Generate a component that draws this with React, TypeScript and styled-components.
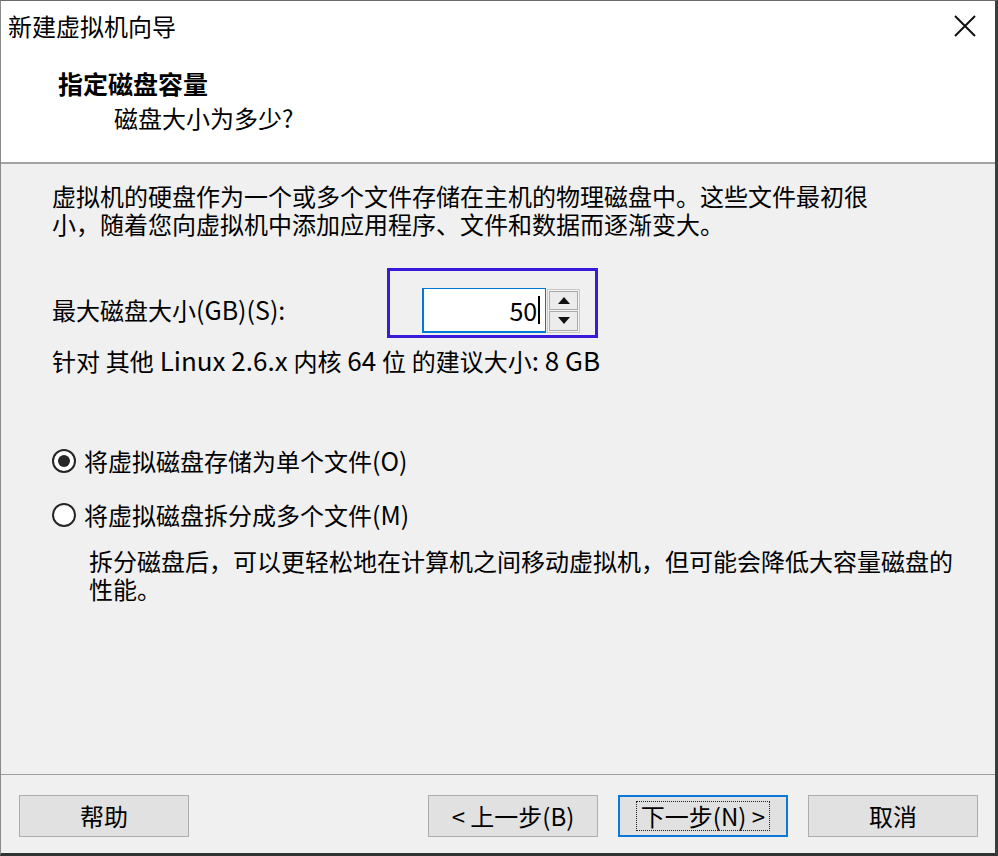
import React from "react";
import styled, { createGlobalStyle } from "styled-components";

const GlobalStyle = createGlobalStyle`
  html, body { margin: 0; padding: 0; background: #f0f0f0; }
  * { box-sizing: border-box; }
  body {
    font-family: "Noto Sans CJK SC", "Noto Sans", sans-serif;
    color: #000;
  }
`;

const Window = styled.div`
  width: 998px;
  height: 856px;
  display: flex;
  flex-direction: column;
  background: #f0f0f0;
  border-left: 1px solid #8a8a8a;
  border-right: 3px solid #34403b;
  border-bottom: 3px solid #2e3531;
  border-top: 1px solid #6a6a6a;
`;

const Header = styled.div`
  height: 163px;
  background: #ffffff;
  border-bottom: 2px solid #a3a3a3;
  display: flex;
  flex-direction: column;
`;

const TitleBar = styled.div`
  height: 49px;
  display: flex;
  align-items: center;
  justify-content: space-between;
  padding: 0 18px 0 7px;
`;

const Title = styled.div`
  font-size: 24px;
  line-height: 28px;
`;

const CloseButton = styled.div`
  width: 24px;
  height: 24px;
  display: flex;
  align-items: center;
  justify-content: center;
`;

const Heading = styled.div`
  margin: 19px 0 0 57px;
  font-size: 25px;
  line-height: 28px;
  font-weight: 700;
`;

const SubHeading = styled.div`
  margin: 7px 0 0 113px;
  font-size: 24px;
  line-height: 28px;
`;

const Body = styled.div`
  flex: 1;
  display: flex;
  flex-direction: column;
  padding: 18px 0 0 51px;
`;

const Text = styled.div<{ $mt?: number; $ml?: number }>`
  font-size: 24px;
  line-height: 28px;
  height: 28px;
  margin-top: ${(p) => p.$mt ?? 0}px;
  margin-left: ${(p) => p.$ml ?? 0}px;
  white-space: pre;
`;

const Latin = styled.span<{ $size?: number }>`
  font-size: ${(p) => p.$size ?? 26}px;
  line-height: 18px;
`;

const SizeRow = styled.div`
  display: flex;
  align-items: flex-start;
  margin-top: 30px;
`;

const SizeLabel = styled.div`
  width: 335px;
  font-size: 24px;
  line-height: 28px;
  margin-top: 28px;
`;

const Highlight = styled.div`
  border: 3px solid #3a1ad8;
  padding: 17px 15px 2px 32px;
  display: flex;
  align-items: center;
  width: 211px;
  height: 70px;
`;

const SpinInput = styled.div`
  width: 125px;
  height: 45px;
  border: 1px solid #0078d7;
  border-left-width: 2px;
  border-bottom-width: 2px;
  background: #fff;
  display: flex;
  align-items: center;
  justify-content: flex-end;
  padding-right: 5px;
  font-size: 25px;
  line-height: 28px;
`;

const Caret = styled.span`
  display: inline-block;
  width: 2px;
  height: 28px;
  background: #000;
  margin-left: 1px;
`;

const Spinner = styled.div`
  width: 33px;
  height: 44px;
  margin-left: 1px;
  border: 1px solid #c8c8c8;
  padding: 1px;
  display: flex;
  flex-direction: column;
  gap: 1px;
  background: #f4f4f4;
`;

const SpinButton = styled.div`
  flex: 1;
  border: 1px solid #a9a9a9;
  background: #ececec;
  display: flex;
  align-items: center;
  justify-content: center;
`;

const RadioRow = styled.div<{ $mt: number }>`
  display: flex;
  align-items: center;
  margin-top: ${(p) => p.$mt}px;
  gap: 8px;
`;

const RadioCircle = styled.div<{ $checked?: boolean }>`
  width: 24px;
  height: 24px;
  border-radius: 50%;
  border: 2px solid #262626;
  background: #fff;
  display: flex;
  align-items: center;
  justify-content: center;
  &::after {
    content: "";
    display: ${(p) => (p.$checked ? "block" : "none")};
    width: 12px;
    height: 12px;
    border-radius: 50%;
    background: #262626;
  }
`;

const Footer = styled.div`
  border-top: 1px solid #a0a0a0;
  height: 79px;
  display: flex;
  padding: 20px 17px 0 18px;
`;

const Button = styled.div<{ $primary?: boolean }>`
  width: 170px;
  height: 42px;
  border: ${(p) => (p.$primary ? "2px solid #0a78d8" : "1px solid #adadad")};
  background: #e1e1e1;
  display: flex;
  align-items: center;
  justify-content: center;
  font-size: 24px;
  line-height: 28px;
`;

const FocusLabel = styled.span`
  outline: 1px dotted #222;
  outline-offset: 1px;
  padding: 0 3px;
  line-height: 26px;
`;

const Spacer = styled.div<{ $w?: number }>`
  ${(p) => (p.$w ? `width: ${p.$w}px;` : "flex: 1;")}
`;

export default function App() {
  return (
    <>
      <GlobalStyle />
      <Window>
        <Header>
          <TitleBar>
            <Title>新建虚拟机向导</Title>
            <CloseButton>
              <svg width="22" height="22" viewBox="0 0 22 22">
                <path d="M1 1 L21 21 M21 1 L1 21" stroke="#111" strokeWidth="2" fill="none" />
              </svg>
            </CloseButton>
          </TitleBar>
          <Heading>指定磁盘容量</Heading>
          <SubHeading>磁盘大小为多少?</SubHeading>
        </Header>
        <Body>
          <Text>虚拟机的硬盘作为一个或多个文件存储在主机的物理磁盘中。这些文件最初很</Text>
          <Text>小，随着您向虚拟机中添加应用程序、文件和数据而逐渐变大。</Text>
          <SizeRow>
            <SizeLabel>
              最大磁盘大小<Latin $size={25}>(GB)(S):</Latin>
            </SizeLabel>
            <Highlight>
              <SpinInput>
                50<Caret />
              </SpinInput>
              <Spinner>
                <SpinButton>
                  <svg width="12" height="7" viewBox="0 0 12 7">
                    <path d="M0 7 L6 0 L12 7 Z" fill="#111" />
                  </svg>
                </SpinButton>
                <SpinButton>
                  <svg width="12" height="7" viewBox="0 0 12 7">
                    <path d="M0 0 L12 0 L6 7 Z" fill="#111" />
                  </svg>
                </SpinButton>
              </Spinner>
            </Highlight>
          </SizeRow>
          <Text $mt={9}>
            针对<Latin> </Latin>其他<Latin> Linux 2.6.x </Latin>内核<Latin> 64 </Latin>位
            <Latin> </Latin>的建议大小<Latin>: 8 GB</Latin>
          </Text>
          <RadioRow $mt={72}>
            <RadioCircle $checked />
            <Text>
              将虚拟磁盘存储为单个文件<Latin $size={25}>(O)</Latin>
            </Text>
          </RadioRow>
          <RadioRow $mt={26}>
            <RadioCircle />
            <Text>
              将虚拟磁盘拆分成多个文件<Latin $size={25}>(M)</Latin>
            </Text>
          </RadioRow>
          <Text $mt={18} $ml={37}>拆分磁盘后，可以更轻松地在计算机之间移动虚拟机，但可能会降低大容量磁盘的</Text>
          <Text $ml={37}>性能。</Text>
        </Body>
        <Footer>
          <Button>帮助</Button>
          <Spacer />
          <Button>&lt; 上一步(B)</Button>
          <Spacer $w={20} />
          <Button $primary>
            <FocusLabel>下一步(N) &gt;</FocusLabel>
          </Button>
          <Spacer $w={20} />
          <Button>取消</Button>
        </Footer>
      </Window>
    </>
  );
}
